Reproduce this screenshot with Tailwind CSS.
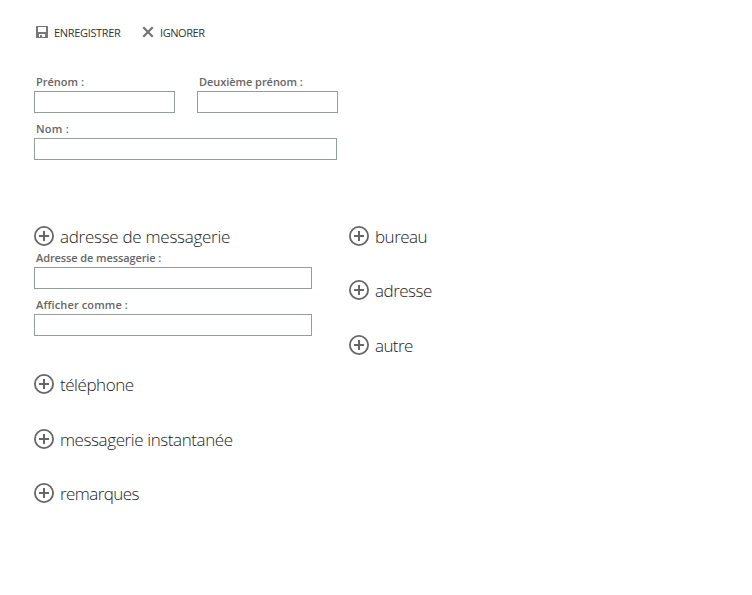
<!DOCTYPE html>
<html lang="fr">
<head>
<meta charset="utf-8">
<title>Contact</title>
<script src="https://cdn.jsdelivr.net/npm/@tailwindcss/browser@4"></script>
</head>
<body class="bg-white">
<svg class="hidden">
  <symbol id="plus" viewBox="0 0 20 20"><circle cx="10" cy="10" r="9.1" fill="none" stroke="#666" stroke-width="1.8"/><path d="M10 5v10M5 10h10" stroke="#666" stroke-width="2"/></symbol>
</svg>
<main class="h-[595px] w-[752px] overflow-hidden pl-[34px] pt-[23px] font-['Open_Sans','Noto_Sans',sans-serif] text-[#444]">
  <header class="flex h-5 items-center text-[11px] text-[#333]">
    <button class="flex w-[108px] items-center pl-[2px]">
      <svg class="mr-[6px] mb-[2px] h-3 w-3 shrink-0" viewBox="0 0 12 12"><path fill="#777" fill-rule="evenodd" d="M0 0h12v12H0zM2 1v5h8V1zM3 8v3h1v-2h2v2h3V8z"/></svg>
      <span class="whitespace-nowrap tracking-[-0.33px]">ENREGISTRER</span>
    </button>
    <button class="flex items-center">
      <svg class="mr-[6px] mb-[2px] h-3 w-3 shrink-0" viewBox="0 0 12 12"><path d="M1.3 1.3l9.4 9.4M10.7 1.3L1.3 10.7" stroke="#737373" stroke-width="2.2"/></svg>
      <span class="whitespace-nowrap tracking-[-0.42px]">IGNORER</span>
    </button>
  </header>

  <section class="mt-[31px] w-[304px] text-[11px] font-semibold text-[#666]">
    <div class="flex gap-[22px]">
      <label class="block"><span class="block h-[17px] pl-[2px] leading-[16px]">Prénom :</span><input class="block h-[22px] w-[141px] border border-[#959e9f] outline-none"></label>
      <label class="block"><span class="block h-[17px] pl-[2px] leading-[16px] tracking-[-0.05px]">Deuxième prénom :</span><input class="block h-[22px] w-[141px] border border-[#959e9f] outline-none"></label>
    </div>
    <label class="mt-2 block"><span class="block h-[17px] pl-[2px] leading-[16px] tracking-[0.25px]">Nom :</span><input class="block h-[22px] w-[303px] border border-[#959e9f] outline-none"></label>
  </section>

  <div class="mt-[66px] flex text-[17px] font-light text-[#222]">
    <section class="w-[315px]">
      <div class="flex h-5 items-center gap-[6px]"><svg class="h-5 w-5"><use href="#plus"/></svg><h2 class="pt-[2px] leading-5 tracking-[-0.27px]">adresse de messagerie</h2></div>
      <div class="pt-[4px] text-[11px] font-semibold text-[#666]">
        <label class="block"><span class="block h-[17px] pl-[2px] leading-[16px] tracking-[-0.1px]">Adresse de messagerie :</span><input class="block h-[22px] w-[278px] border border-[#959e9f] outline-none"></label>
        <label class="mt-2 block"><span class="block h-[17px] pl-[2px] leading-[16px] tracking-[0.12px]">Afficher comme :</span><input class="block h-[22px] w-[278px] border border-[#959e9f] outline-none"></label>
      </div>
      <div class="mt-[38px] flex h-5 items-center gap-[6px]"><svg class="h-5 w-5"><use href="#plus"/></svg><h2 class="pt-[2px] leading-5 tracking-[-0.45px]">téléphone</h2></div>
      <div class="mt-[35px] flex h-5 items-center gap-[6px]"><svg class="h-5 w-5"><use href="#plus"/></svg><h2 class="pt-[2px] leading-5 tracking-[-0.4px]">messagerie instantanée</h2></div>
      <div class="mt-[34px] flex h-5 items-center gap-[6px]"><svg class="h-5 w-5"><use href="#plus"/></svg><h2 class="pt-[2px] leading-5 tracking-[-0.58px]">remarques</h2></div>
    </section>
    <section>
      <div class="flex h-5 items-center gap-[6px]"><svg class="h-5 w-5"><use href="#plus"/></svg><h2 class="pt-[2px] leading-5 tracking-[-0.5px]">bureau</h2></div>
      <div class="mt-[34px] flex h-5 items-center gap-[6px]"><svg class="h-5 w-5"><use href="#plus"/></svg><h2 class="pt-[2px] leading-5 tracking-[-0.5px]">adresse</h2></div>
      <div class="mt-[35px] flex h-5 items-center gap-[6px]"><svg class="h-5 w-5"><use href="#plus"/></svg><h2 class="pt-[2px] leading-5 tracking-[-0.6px]">autre</h2></div>
    </section>
  </div>
</main>
</body>
</html>
